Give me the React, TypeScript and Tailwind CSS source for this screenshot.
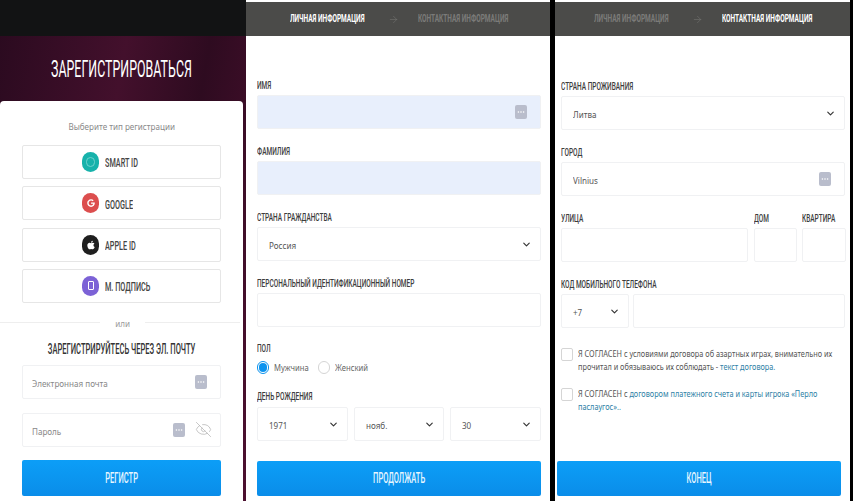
import { ReactNode } from "react";
import { ArrowRight, ChevronDown, EyeOff } from "lucide-react";
import { FaApple, FaGoogle } from "react-icons/fa";

const Cond = ({ children, className = "" }: { children: ReactNode; className?: string }) => (
  <span className={`block w-fit whitespace-nowrap font-['Roboto',sans-serif] ${className}`}>
    {children}
  </span>
);

const Txt = ({
  children,
  className = "",
  squeeze = "scale-x-[.85]",
}: {
  children: ReactNode;
  className?: string;
  squeeze?: string;
}) => (
  <span
    className={`block w-fit whitespace-nowrap font-['Noto_Sans',sans-serif] text-[9.5px] leading-[13px] ${squeeze} ${className}`}
  >
    {children}
  </span>
);

const Keypad = () => (
  <svg width="12" height="14" viewBox="0 0 12 14" className="shrink-0">
    <rect width="12" height="14" rx="2" fill="#b9bdcc" />
    <circle cx="3.4" cy="7" r="0.8" fill="#fff" />
    <circle cx="6" cy="7" r="0.8" fill="#fff" />
    <circle cx="8.6" cy="7" r="0.8" fill="#fff" />
  </svg>
);

const Label = ({ children }: { children: ReactNode }) => (
  <div className="h-[12px] mb-[4px] text-[#3d3d3d]">
    <Cond className="text-[11.5px] leading-[12px] font-medium origin-left scale-x-[.565]">{children}</Cond>
  </div>
);

const Box = ({
  children,
  className = "",
}: {
  children?: ReactNode;
  className?: string;
}) => (
  <div
    className={`h-[34px] flex items-center justify-between rounded-[2px] border border-[#f0f1f3] text-[#555] ${className}`}
  >
    {children}
  </div>
);

const Select = ({ value, className = "" }: { value: string; className?: string }) => (
  <Box className={`pl-[11px] pr-[8px] ${className}`}>
    <Txt className="origin-left mt-[3px]">{value}</Txt>
    <ChevronDown size={11} strokeWidth={2.5} color="#333" />
  </Box>
);

const BlueButton = ({ children, className = "" }: { children: ReactNode; className?: string }) => (
  <div
    className={`h-[35px] flex items-center justify-center rounded-[2px] bg-gradient-to-b from-[#0c9ef7] to-[#0a8de9] text-[#e6f6ff] ${className}`}
  >
    <Cond className="text-[15px] font-medium scale-x-[.5]">{children}</Cond>
  </div>
);

const Steps = ({ active }: { active: 1 | 2 }) => (
  <div className="h-[34px] flex items-center bg-[#4b4b49]">
    <div className="w-[98px] shrink-0">
      <Cond
        className={`text-[11px] font-bold origin-left scale-x-[.59] ${active === 1 ? "text-white" : "text-[#7b7b79]"}`}
      >
        ЛИЧНАЯ ИНФОРМАЦИЯ
      </Cond>
    </div>
    <div className="w-[30px] shrink-0">
      <ArrowRight size={11} strokeWidth={1} color="#7d7d7b" />
    </div>
    <Cond
      className={`text-[11px] font-bold origin-left scale-x-[.59] ${active === 2 ? "text-white" : "text-[#7b7b79]"}`}
    >
      КОНТАКТНАЯ ИНФОРМАЦИЯ
    </Cond>
  </div>
);

const options = [
  {
    name: "SMART ID",
    color: "bg-[#17b2ab]",
    icon: <span className="w-[9px] h-[10px] rounded-full border border-[#6fd3ce]" />,
  },
  { name: "GOOGLE", color: "bg-[#dc4e4e]", icon: <FaGoogle size={8} color="#fff" /> },
  { name: "APPLE ID", color: "bg-[#1f1f1f]", icon: <FaApple size={10} color="#fff" /> },
  {
    name: "М. ПОДПИСЬ",
    color: "bg-[#7c62d6]",
    icon: <span className="w-[6px] h-[9px] rounded-[1px] border border-white" />,
  },
];

const Radio = ({ checked, label }: { checked?: boolean; label: string }) => (
  <div className="flex items-center gap-[5px]">
    <span
      className={`w-[12px] h-[13px] rounded-full flex items-center justify-center border ${checked ? "border-[#0c93ee]" : "border-[#d5d5d5]"}`}
    >
      {checked && <span className="w-[8px] h-[9px] rounded-full bg-[#0c93ee]" />}
    </span>
    <div className="w-[32px]">
      <Txt className="origin-left text-[9px] text-[#666]">{label}</Txt>
    </div>
  </div>
);

const Check = () => (
  <span className="w-[12px] h-[13px] shrink-0 rounded-[2px] border border-[#d5d5d5]" />
);

const Agree = ({ children, className = "" }: { children: ReactNode; className?: string }) => (
  <Txt squeeze="scale-x-[.77]" className={`origin-left text-[8.5px] leading-[13.5px] ${className}`}>
    {children}
  </Txt>
);

export default function App() {
  return (
    <div className="w-[854px] h-[501px] flex overflow-hidden bg-white">
      {/* регистрация */}
      <div className="w-[246px] flex flex-col bg-[linear-gradient(100deg,#2a0a1f,#43102c_40%,#2e0b20_65%,#4d1030)]">
        <div className="h-[36px] bg-[#121314]" />
        <div className="h-[65px] pt-[3px] flex items-center justify-center pr-[3px] text-white">
          <Cond className="text-[23px] font-normal scale-x-[.54]">ЗАРЕГИСТРИРОВАТЬСЯ</Cond>
        </div>
        <div className="w-[243px] flex-1 flex flex-col rounded-t-[4px] bg-white">
          <div className="h-[44px] pt-[19px] flex justify-center">
            <Txt className="text-[#8a8a8a]">Выберите тип регистрации</Txt>
          </div>
          <div className="px-[22px] flex flex-col gap-[7.3px]">
            {options.map((o) => (
              <div
                key={o.name}
                className="h-[34px] flex items-center gap-[6px] pl-[59px] rounded-[2px] border border-[#e6e6e6] text-[#444]"
              >
                <span
                  className={`w-[17px] h-[20px] shrink-0 rounded-full flex items-center justify-center ${o.color}`}
                >
                  {o.icon}
                </span>
                <Cond className="mt-[2px] text-[13px] font-medium origin-left scale-x-[.56]">{o.name}</Cond>
              </div>
            ))}
          </div>
          <div className="h-[40px] flex items-center">
            <div className="w-[100px] h-px bg-[#eeeeee]" />
            <div className="w-[45px] flex justify-center">
              <Txt className="mt-[2px] text-[#999]">или</Txt>
            </div>
            <div className="flex-1 mr-[3px] h-px bg-[#eeeeee]" />
          </div>
          <div className="h-[12px] flex items-center justify-center text-[#333]">
            <Cond className="mt-[2px] text-[14px] font-medium scale-x-[.54]">
              ЗАРЕГИСТРИРУЙТЕСЬ ЧЕРЕЗ ЭЛ. ПОЧТУ
            </Cond>
          </div>
          <div className="px-[22px] mt-[10px] flex flex-col gap-[14px]">
            <Box className="pl-[9px] pr-[13px]">
              <Txt className="origin-left mt-[3px] text-[#888]">Электронная почта</Txt>
              <Keypad />
            </Box>
            <Box className="pl-[9px] pr-[8px]">
              <Txt className="origin-left mt-[3px] text-[#888]">Пароль</Txt>
              <div className="flex items-center gap-[10px]">
                <Keypad />
                <EyeOff size={17} strokeWidth={1} color="#b0b0b0" />
              </div>
            </Box>
            <BlueButton className="-mt-[1px] h-[36px]">РЕГИСТР</BlueButton>
          </div>
        </div>
      </div>

      {/* личная информация */}
      <div className="w-[304px] pt-[2px] flex flex-col">
        <div className="pl-[44px] bg-[#4b4b49]">
          <Steps active={1} />
        </div>
        <div className="pl-[11px] pr-[9px] pt-[43px] flex flex-col">
          <Label>ИМЯ</Label>
          <Box className="bg-[#e8effc] border-[#e8effc] pr-[13px] justify-end">
            <Keypad />
          </Box>
          <div className="h-[16px]" />
          <Label>ФАМИЛИЯ</Label>
          <Box className="bg-[#e8effc] border-[#e8effc]" />
          <div className="h-[16px]" />
          <Label>СТРАНА ГРАЖДАНСТВА</Label>
          <Select value="Россия" />
          <div className="h-[16px]" />
          <Label>ПЕРСОНАЛЬНЫЙ ИДЕНТИФИКАЦИОННЫЙ НОМЕР</Label>
          <Box />
          <div className="h-[15px]" />
          <Label>ПОЛ</Label>
          <div className="h-[14px] mt-[2px] flex items-center gap-[12px]">
            <Radio checked label="Мужчина" />
            <Radio label="Женский" />
          </div>
          <div className="h-[16px]" />
          <div className="mb-[1px]">
            <Label>ДЕНЬ РОЖДЕНИЯ</Label>
          </div>
          <div className="grid grid-cols-3 gap-[6px]">
            <Select value="1971" />
            <Select value="нояб." />
            <Select value="30" />
          </div>
          <BlueButton className="mt-[20px]">ПРОДОЛЖАТЬ</BlueButton>
        </div>
      </div>

      <div className="w-[5px] bg-black" />

      {/* контактная информация */}
      <div className="w-[295px] pt-[2px] flex flex-col">
        <div className="pl-[39px] bg-[#4b4b49]">
          <Steps active={2} />
        </div>
        <div className="pl-[6px] pr-[5px] pt-[44px] flex flex-col">
          <Label>СТРАНА ПРОЖИВАНИЯ</Label>
          <Select value="Литва" />
          <div className="h-[16px]" />
          <Label>ГОРОД</Label>
          <Box className="pl-[11px] pr-[13px]">
            <Txt className="origin-left mt-[3px]">Vilnius</Txt>
            <Keypad />
          </Box>
          <div className="h-[16px]" />
          <div className="grid grid-cols-[187px_43px_43px] gap-x-[6px]">
            <div>
              <Label>УЛИЦА</Label>
              <Box />
            </div>
            <div>
              <Label>ДОМ</Label>
              <Box />
            </div>
            <div className="-ml-[1px]">
              <Label>КВАРТИРА</Label>
              <Box />
            </div>
          </div>
          <div className="h-[16px]" />
          <Label>КОД МОБИЛЬНОГО ТЕЛЕФОНА</Label>
          <div className="flex gap-[4px]">
            <Select value="+7" className="w-[68px] shrink-0" />
            <Box className="flex-1" />
          </div>
          <div className="mt-[20px] h-[27px] flex gap-[5px] text-[#555]">
            <Check />
            <div className="-mt-[1px]">
              <Agree>Я СОГЛАСЕН с условиями договора об азартных играх, внимательно их</Agree>
              <Agree>
                прочитал и обязываюсь их соблюдать - <span className="text-[#2e7fa6]">текст договора.</span>
              </Agree>
            </div>
          </div>
          <div className="mt-[13px] h-[27px] flex gap-[5px] text-[#555]">
            <Check />
            <div className="-mt-[1px]">
              <Agree>
                Я СОГЛАСЕН с <span className="text-[#2e7fa6]">договором платежного счета и карты игрока «Перло</span>
              </Agree>
              <Agree className="text-[#2e7fa6]">паслаугос»..</Agree>
            </div>
          </div>
          <BlueButton className="mt-[46px] -ml-[4px] mr-[4px]">КОНЕЦ</BlueButton>
        </div>
      </div>

      <div className="w-[3px] bg-black" />
    </div>
  );
}
